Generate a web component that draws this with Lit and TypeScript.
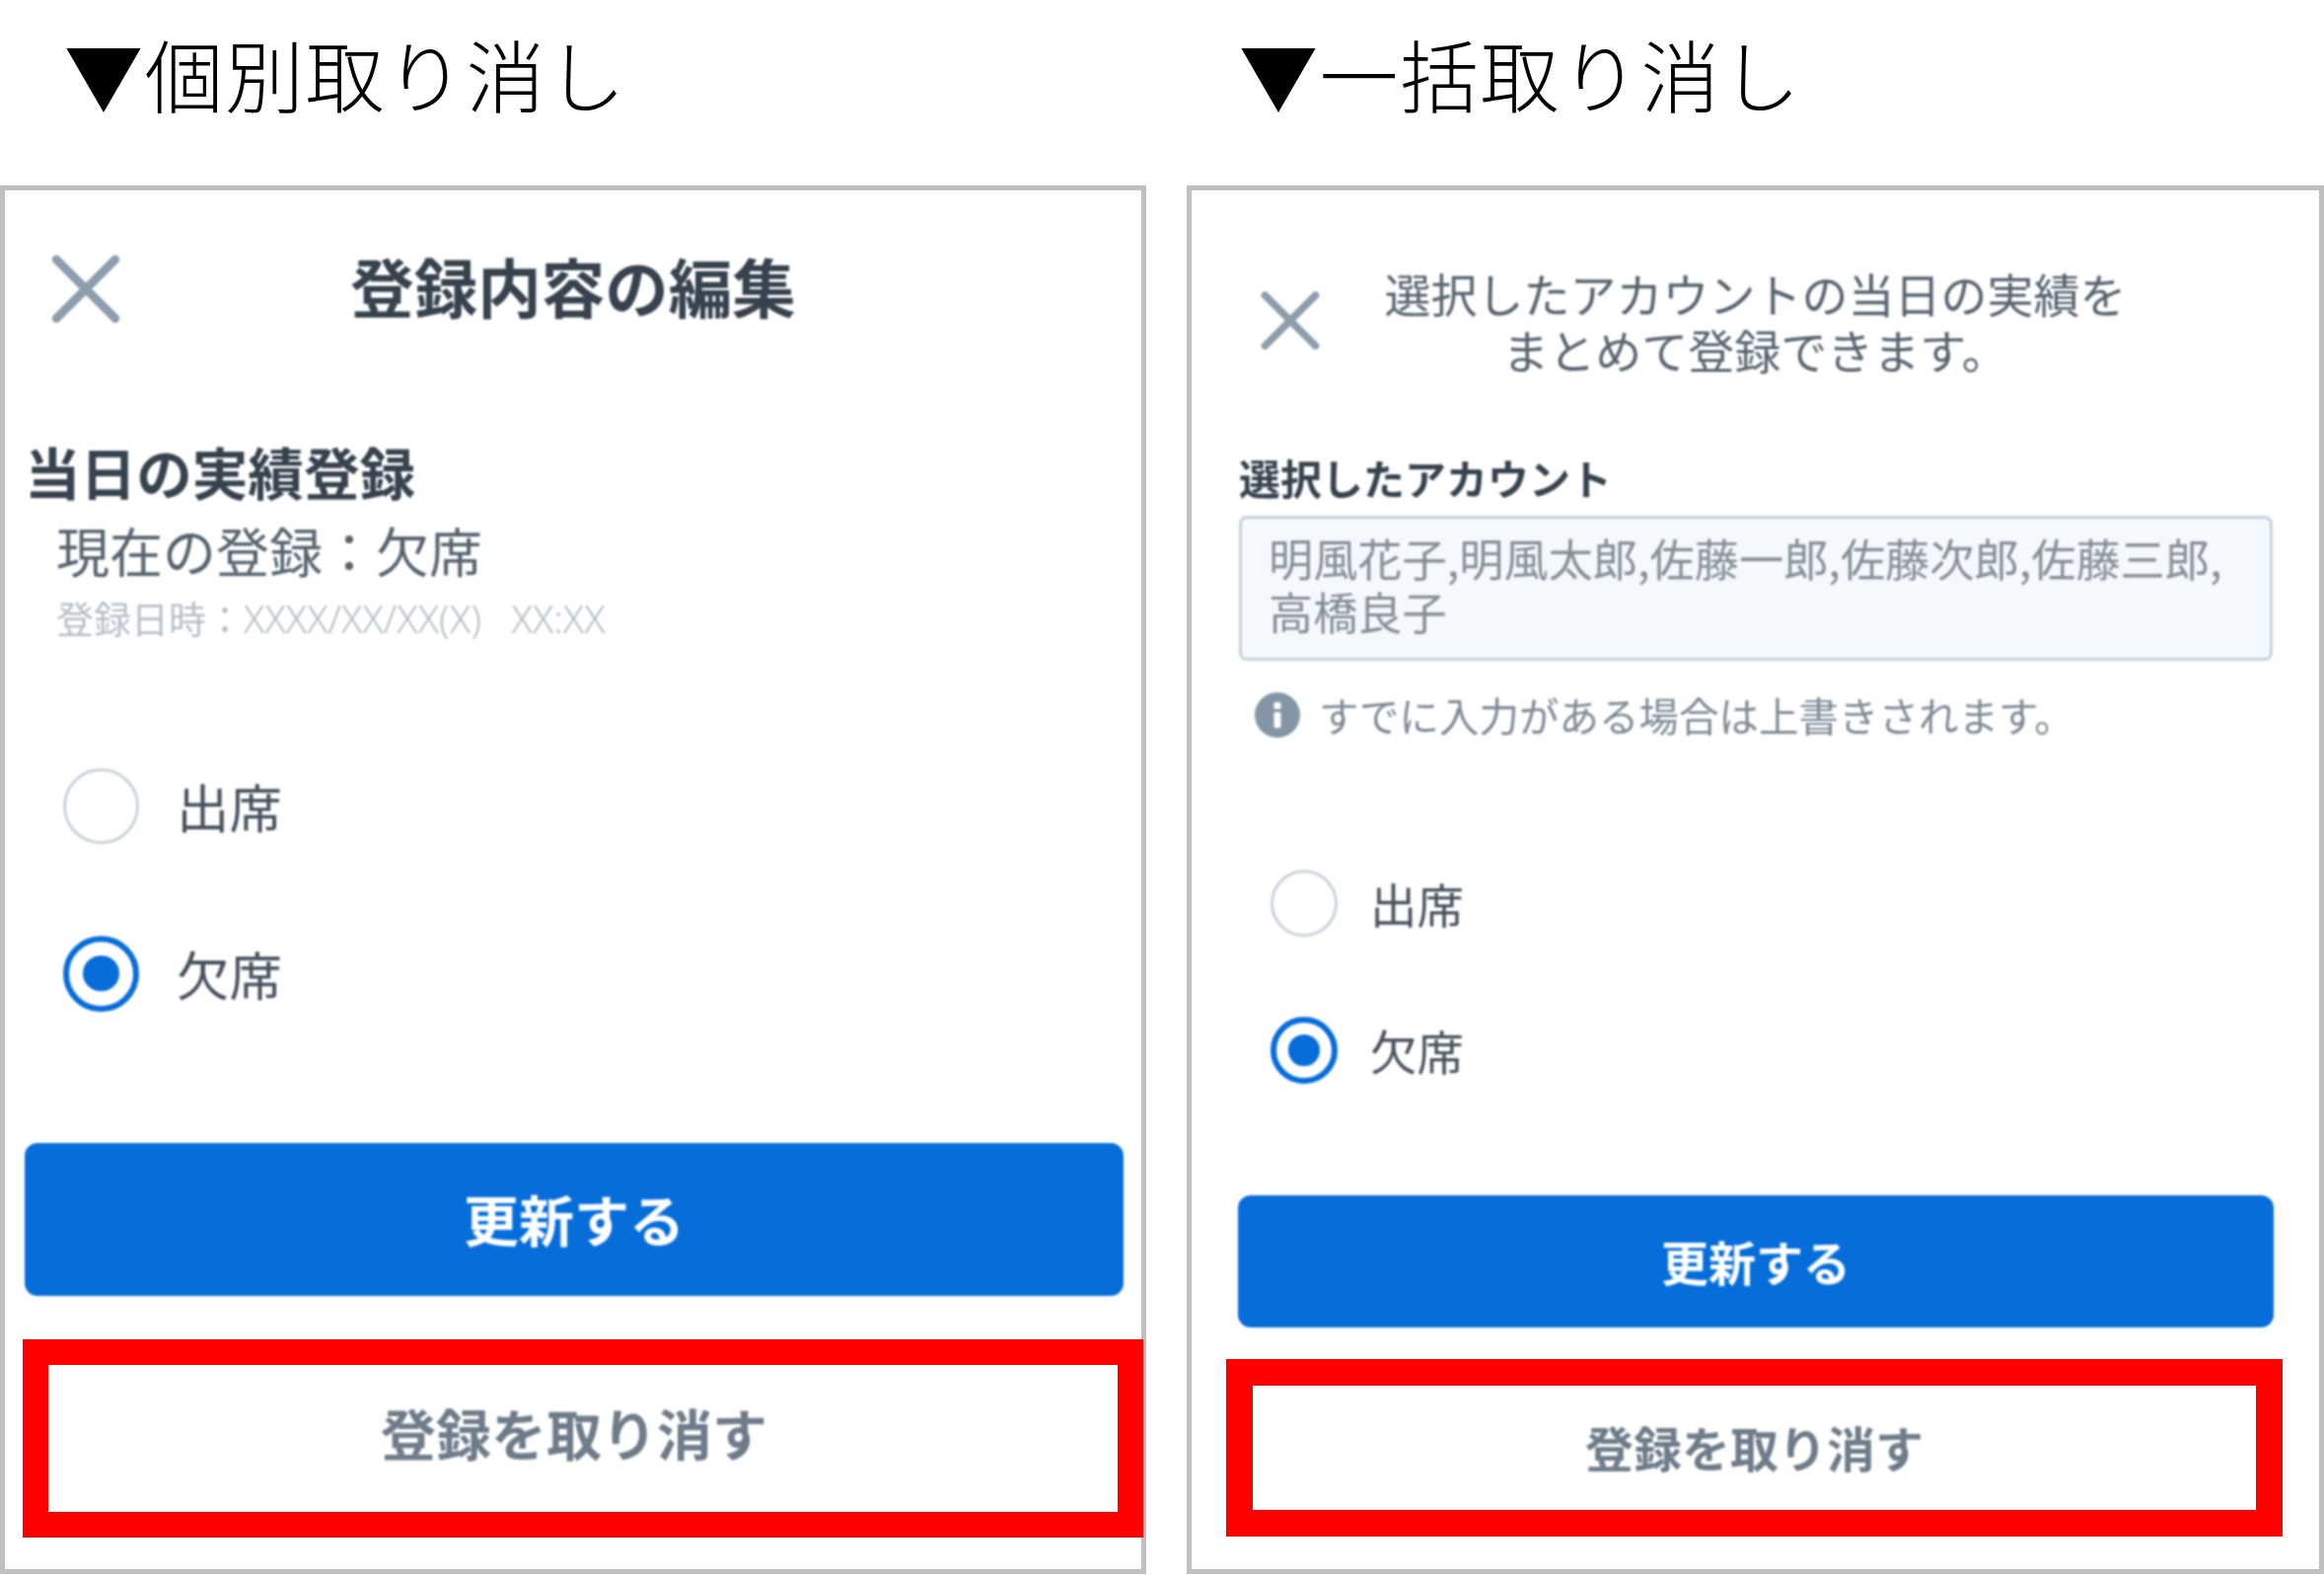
import { LitElement, html, css } from "lit";
import { customElement } from "lit/decorators.js";

const closeIcon = (cls: string) => html`<svg class=${cls} viewBox="0 0 68 68" fill="none" stroke="#8c9dac" stroke-width="8.5" stroke-linecap="round"><path d="M5 5L63 63M63 5L5 63"/></svg>`;

const infoIcon = html`<svg class="info-icon" viewBox="0 0 46 46"><circle cx="23" cy="23" r="23" fill="#8496a6"/><rect x="19.5" y="10" width="7" height="7" rx="1.5" fill="#fff"/><rect x="19.5" y="20" width="7" height="16" rx="1.5" fill="#fff"/></svg>`;

@customElement("app-root")
export class AppRoot extends LitElement {
  static styles = css`
    :host { display: block; width: 2356px; height: 1597px; background: #fff; overflow: hidden;
      font-family: "Noto Sans CJK JP", "Noto Sans", sans-serif; }
    * { box-sizing: border-box; }
    .page { display: grid; grid-template-columns: 1162px 1153px; column-gap: 41px; padding-top: 23px; }
    .heading { height: 100px; line-height: 100px; font-size: 80px; font-weight: 300; letter-spacing: 1.5px; color: #000; margin-bottom: 65px; white-space: nowrap; }
    .col-a .heading { padding-left: 65px; }
    .col-b .heading { padding-left: 53px; }
    .panel { height: 1408px; border: 5px solid #bfbfbf; display: flex; flex-direction: column; background: #fff; }
    .soft { filter: blur(0.9px); }
    .head { display: grid; grid-template-columns: 1fr auto 1fr; align-items: center; }
    .col-a .head { margin-top: 56px; height: 80px; }
    .title-a { font-size: 64.5px; line-height: 80px; font-weight: 700; color: #36424e; }
    .x-a { width: 70px; height: 70px; display: block; margin: 8px 0 0 47px; }
    .x-b { width: 60px; height: 60px; display: block; margin-left: 70px; }
    .col-b .head { margin-top: 75px; }
    .desc { font-size: 47px; line-height: 57px; color: #56636f; text-align: center; }
    .sec { margin: 118px 0 0 20px; font-size: 56.6px; line-height: 60px; font-weight: 700; color: #36424e; }
    .cur { margin: 21px 0 0 52px; font-size: 54px; line-height: 60px; color: #56636f; }
    .date { margin: 16px 0 0 52px; font-size: 38px; line-height: 44px; color: #b6bec6; white-space: pre; }
    .date span { font-size: 39px; font-family: "Noto Sans", sans-serif; font-weight: 300; }
    .options { display: flex; flex-direction: column; }
    .col-a .options { margin: 129px 0 0 59px; gap: 92px; }
    .col-b .options { margin: 132px 0 0 80px; gap: 81px; }
    .opt { display: flex; align-items: center; color: #46525e; }
    .col-a .opt { gap: 38px; font-size: 53.5px; line-height: 78px; }
    .col-b .opt { gap: 33px; font-size: 47.5px; line-height: 68px; }
    .radio { border-radius: 50%; border: 3px solid #c8d2dc; background: #fff; display: flex; align-items: center; justify-content: center; flex: none; }
    .col-a .radio { width: 77px; height: 77px; }
    .col-b .radio { width: 68px; height: 68px; }
    .radio.on { border: 6px solid #066dda; }
    .radio.on::after { content: ""; border-radius: 50%; background: #066dda; width: 56%; height: 56%; }
    .primary { border-radius: 13px; background: #066dda; color: #fff; font-weight: 700; display: flex; align-items: center; justify-content: center; }
    .col-a .primary { margin: 133px 0 0 20px; width: 1114px; height: 155px; font-size: 56px; padding-bottom: 4px; }
    .col-b .primary { margin: 113px 0 0 47px; width: 1050px; height: 134px; font-size: 48px; padding-bottom: 3px; }
    .cancel { border-style: solid; border-color: #ff0000; background: #fff; display: flex; align-items: center; justify-content: center; }
    .cancel span { color: #6e7c8a; font-weight: 700; }
    .col-a .cancel { margin: 44px 0 0 18px; width: 1136px; height: 201px; border-width: 26px; padding: 0 18px 15px 0; }
    .col-a .cancel span { font-size: 56px; }
    .col-b .cancel { margin: 32px 0 0 35px; width: 1071px; height: 180px; border-width: 27px; padding-bottom: 4px; }
    .col-b .cancel span { font-size: 49px; }
    .label { margin: 77px 0 0 48px; font-size: 42px; line-height: 50px; font-weight: 700; color: #36424e; }
    .names { margin: 14px 0 0 48px; width: 1048px; height: 147px; border: 3px solid #c6d1db; border-radius: 8px; background: #f6f9fc;
      padding: 13px 20px 0 27px; font-size: 45.2px; line-height: 54px; color: #868d95; }
    .info { margin: 30px 0 0 64px; display: flex; align-items: center; gap: 19px; font-size: 40.5px; line-height: 50px; color: #7e8a96; white-space: nowrap; }
    .info-icon { width: 46px; height: 46px; display: block; flex: none; }
  `;

  render() {
    return html`
      <div class="page">
        <section class="col-a">
          <div class="heading">▼個別取り消し</div>
          <div class="panel">
            <div class="head soft">${closeIcon("x-a")}<div class="title-a">登録内容の編集</div><div></div></div>
            <div class="sec soft">当日の実績登録</div>
            <div class="cur soft">現在の登録：欠席</div>
            <div class="date soft">登録日時：<span>XXXX/XX/XX(X)   XX:XX</span></div>
            <div class="options soft">
              <div class="opt"><div class="radio"></div>出席</div>
              <div class="opt"><div class="radio on"></div>欠席</div>
            </div>
            <div class="primary soft">更新する</div>
            <div class="cancel"><span class="soft">登録を取り消す</span></div>
          </div>
        </section>
        <section class="col-b">
          <div class="heading">▼一括取り消し</div>
          <div class="panel">
            <div class="head soft">${closeIcon("x-b")}<div class="desc">選択したアカウントの当日の実績を<br />まとめて登録できます。</div><div></div></div>
            <div class="label soft">選択したアカウント</div>
            <div class="names soft">明風花子,明風太郎,佐藤一郎,佐藤次郎,佐藤三郎,<br />高橋良子</div>
            <div class="info soft">${infoIcon}すでに入力がある場合は上書きされます。</div>
            <div class="options soft">
              <div class="opt"><div class="radio"></div>出席</div>
              <div class="opt"><div class="radio on"></div>欠席</div>
            </div>
            <div class="primary soft">更新する</div>
            <div class="cancel"><span class="soft">登録を取り消す</span></div>
          </div>
        </section>
      </div>
    `;
  }
}
